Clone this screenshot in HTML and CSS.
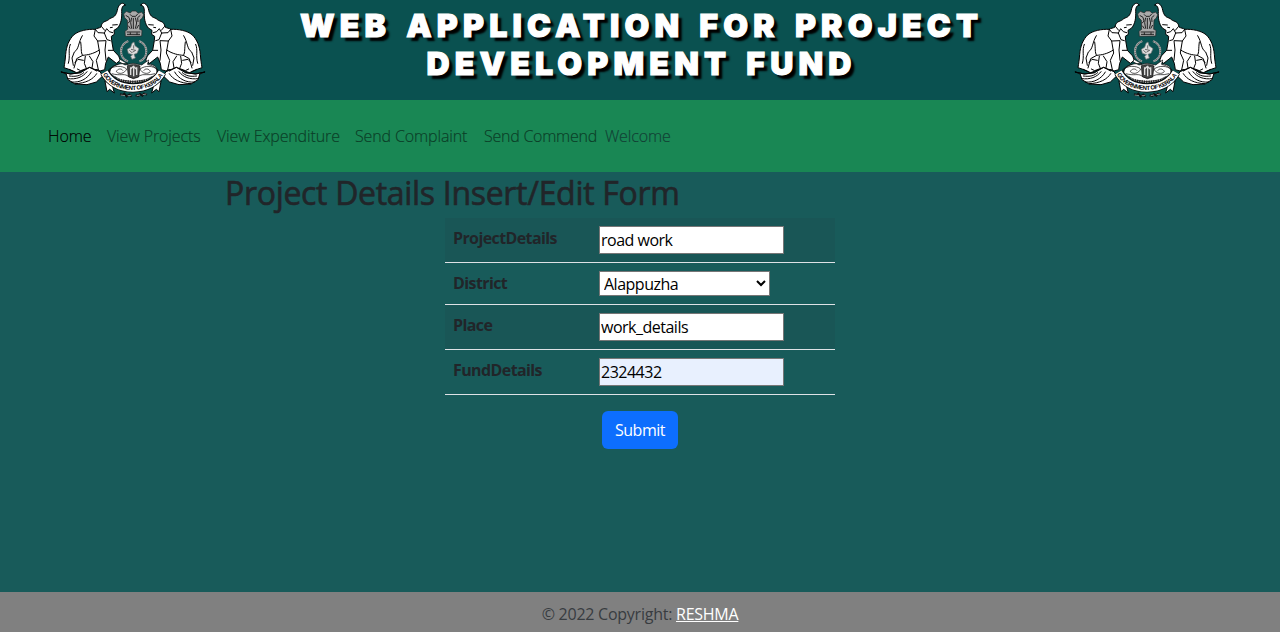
FILE: index.html
```
<!DOCTYPE html>
<html lang="en">
<head>
<meta charset="utf-8">
<title>Project Development Fund</title>
<link rel="stylesheet" href="styles.css">
</head>
<body>
<svg class="defs" aria-hidden="true">
  <defs>
    <g id="elephant" stroke-linejoin="round" stroke-linecap="round">
      <path fill="#fff" stroke="#000" stroke-width="3" d="M225 15C221 5 208 9 203 26C200 42 195 51 183 54C177 56 176 61 168 63C158 66 154 72 153 81C147 85 141 84 136 88C112 87 87 92 72 104C56 119 49 140 47 163C46 178 44 191 42 203L54 207L80 218L110 207L143 209L150 213L164 209L167 190L175 171L199 190L211 181L206 168L190 151L185 122L184 109L193 103L192 91L203 84C214 70 216 53 215 34C215 23 217 17 225 15Z"/>
      <g fill="none" stroke="#000" stroke-width="3">
        <path d="M136 88L144 98L163 99L171 119L181 122M136 88L132 108L143 123L149 159L139 181L145 209M143 123L168 122L165 150L168 181M163 99L170 86L178 95L188 98M155 80L164 91M188 75L202 74M181 83L187 82"/>
        <path d="M92 126C95 145 92 158 98 166L80 176L72 204M148 150C130 162 112 165 98 166M97 107C84 128 88 146 73 156L66 174L70 196M61 133C53 151 62 167 55 190M106 169L103 190L109 205M118 168L129 185L126 204M175 151L190 151M75 187L84 178L100 181"/>
      </g>
      <path d="M34 216L61 222L92 218L119 202L150 215L158 228L139 246L111 254L75 252L54 239L49 223Z" fill="#fff" stroke="#000" stroke-width="3"/>
      <path d="M34 216L61 222L91 218M53 236C79 239 98 232 111 215M64 246C89 249 112 237 124 216M76 251C107 250 130 238 140 221M58 228C79 231 91 227 101 218M82 207L92 212L119 202L140 213M58 208L73 215" fill="none" stroke="#000" stroke-width="3"/>
      <path d="M165 244L171 275L179 268L193 279L188 260" fill="#fff" stroke="#000" stroke-width="3"/>
    </g>
    <path id="ribbon-arc" d="M157 222Q185 269 249 270Q313 269 341 222"/>
    <symbol id="emblem" viewBox="0 0 495 300">
      <use href="#elephant"/>
      <use href="#elephant" transform="translate(498 0) scale(-1 1)"/>
      <g fill="none" stroke="#aaa" stroke-width="6">
        <path d="M235 123C205 135 207 174 234 184M267 123C297 135 295 174 268 184"/>
        <path d="M235 123C205 135 207 174 234 184M267 123C297 135 295 174 268 184" stroke="#222" stroke-width="2" stroke-dasharray="3 3"/>
      </g>
      <path d="M224 53L221 42L229 34L241 39L246 33L258 33L264 40L275 36L281 44L277 54L270 60L269 88L276 91L275 108L226 109L225 94L233 88L232 61Z" fill="#aaa" stroke="#222" stroke-width="2"/>
      <path d="M227 46L237 52L240 63L234 70M240 43L246 49L257 49L263 42M271 46L263 53L264 66M245 53L242 68L245 86M256 53L260 69L256 86M250 54V87M235 77L241 86M266 75L260 86M230 96H271M231 103H270M241 97V105M261 97V105" stroke="#222" stroke-width="3" fill="none"/>
      <path d="M246 130L252 126L255 137L267 146L261 160L252 163L256 174L246 178L242 169L248 164L235 160L232 148L242 142Z" fill="#ddd" stroke="#777" stroke-width="2"/>
      <path d="M243 148L257 151L247 157M238 151L246 158M251 136V146" stroke="#333" stroke-width="2" fill="none"/>
      <path d="M180 220C176 202 200 188 233 191L210 178L207 185L225 195L249 190L275 195L296 180L293 192C316 191 326 207 319 223L286 244L249 250L211 244Z" fill="#fff" stroke="#000" stroke-width="2"/>
      <g fill="none" stroke="#000" stroke-width="2">
        <path d="M175 210C190 196 217 196 230 207C224 221 207 224 199 215C202 206 214 204 219 212M325 210C308 196 286 196 270 207C276 221 293 224 301 215C298 206 286 204 281 212"/>
        <path d="M185 221C211 228 220 220 232 227C246 235 255 235 269 227C281 220 294 228 315 221M194 229L212 240L249 245L286 240L307 229M205 193C184 199 181 204 178 217M292 193C316 199 319 204 322 217"/>
      </g>
      <path d="M232 197L245 194H257L270 198L266 231L250 236L235 230Z" fill="#444" stroke="#000" stroke-width="2"/>
      <path d="M251 197V229M242 207L250 199L259 207M242 202V225M260 202V225" stroke="#ddd" stroke-width="4" fill="none"/>
      <path d="M205 239C234 248 268 248 295 239" stroke="#222" stroke-width="8" fill="none" stroke-dasharray="4 3"/>
      <path d="M163 217Q189 263 249 264Q309 263 336 217" fill="none" stroke="#000" stroke-width="27"/>
      <path d="M163 217Q189 263 249 264Q309 263 336 217" fill="none" stroke="#fff" stroke-width="22"/>
      <text class="ribbon-text"><textPath href="#ribbon-arc" startOffset="2" textLength="212">GOVERNMENT OF KERALA</textPath></text>
      <path d="M210 283L218 285L223 281L230 289L238 284L245 289M257 286L265 288L270 282L277 287L282 281L291 284" stroke="#111" stroke-width="6" fill="none"/>
      <path d="M212 285L225 287M233 287L244 286M260 287L270 285M278 284L289 282" stroke="#bbb" stroke-width="2" fill="none"/>
    </symbol>
  </defs>
</svg>
<header class="banner">
  <svg class="emblem"><use href="#emblem"/></svg>
  <h1 class="banner-title"><span class="line-one">WEB APPLICATION FOR PROJECT</span><span class="line-two">DEVELOPMENT FUND</span></h1>
  <svg class="emblem"><use href="#emblem"/></svg>
</header>
<nav class="navbar">
  <a class="nav-link active home">Home</a>
  <a class="nav-link projects">View Projects</a>
  <a class="nav-link expenditure">View Expenditure</a>
  <a class="nav-link complaint">Send Complaint</a>
  <a class="nav-link commend">Send Commend</a>
  <span class="welcome">Welcome</span>
</nav>
<main class="content">
  <h2 class="form-title">Project Details Insert/Edit Form</h2>
  <form class="details-form">
    <div class="row striped"><label>ProjectDetails</label><input type="text" value="road work"></div>
    <div class="row short"><label>District</label><select><option>Alappuzha</option></select></div>
    <div class="row striped"><label>Place</label><input type="text" value="work_details"></div>
    <div class="row"><label>FundDetails</label><input class="autofilled" type="text" value="2324432"></div>
    <button class="submit" type="button">Submit</button>
  </form>
</main>
<footer class="footer"><span>© 2022 Copyright: <a class="author">RESHMA</a></span></footer>
</body>
</html>
```
FILE: styles.css
```
* { box-sizing: border-box; }
body {
  margin: 0;
  height: 632px;
  display: flex;
  flex-direction: column;
  overflow: hidden;
  background: #185b5a;
  color: #212529;
  font: 16px/24px "Open Sans", "Noto Sans", sans-serif;
}
.defs { position: absolute; width: 0; height: 0; }
.banner {
  height: 100px;
  flex: none;
  display: flex;
  justify-content: space-between;
  padding: 0 51px 0 50px;
  background: #0a5150;
}
.emblem { width: 165px; height: 100px; flex: none; }
.ribbon-text { font: bold 18px "Liberation Sans", sans-serif; fill: #000; }
.banner-title {
  margin: 0;
  padding: 7px 0 0 4px;
  display: flex;
  flex-direction: column;
  align-items: center;
  white-space: nowrap;
  color: #fff;
  font: 900 32px/38px Inter, sans-serif;
  letter-spacing: 5.2px;
  word-spacing: 3.5px;
  -webkit-text-stroke: 1.1px #fff;
  text-shadow: 4px 4px 2px #000;
}
.navbar {
  height: 72px;
  flex: none;
  display: flex;
  align-items: center;
  padding-left: 40px;
  background: #198754;
}
.nav-link {
  padding: 0 8px;
  white-space: nowrap;
  font-weight: 300;
  letter-spacing: -0.13px;
  color: #0b3d27;
  -webkit-text-stroke: 0.15px #0b3d27;
}
.nav-link.active { color: #000; -webkit-text-stroke-color: #000; }
.home { width: 59px; }
.projects { width: 110px; }
.expenditure { width: 138px; }
.complaint { width: 129px; }
.commend { width: 129px; letter-spacing: -0.25px; }
.welcome {
  font-weight: 300;
  letter-spacing: -0.15px;
  color: #123f34;
  -webkit-text-stroke: 0.15px #123f34;
}
.content { flex: 1; }
.form-title {
  margin: 0 0 6px;
  padding: 2px 0 0 225px;
  font-size: 32px;
  line-height: 38px;
  font-weight: 500;
  letter-spacing: -0.31px;
  -webkit-text-stroke: 0.6px #212529;
}
.details-form { width: 390px; margin-left: 445px; }
.row {
  display: flex;
  align-items: flex-start;
  height: 45px;
  padding: 8px;
  border-bottom: 1px solid #dee2e6;
}
.row.short { height: 42px; }
.row.striped { background: #195656; }
.row label { width: 146px; font-weight: 700; letter-spacing: -0.6px; }
.row input,
.row select,
.submit {
  font: 16px "Open Sans", sans-serif;
  letter-spacing: -0.5px;
}
.row input {
  width: 185px;
  height: 28px;
  padding: 0 0 1px 1px;
  border: 1px solid #767676;
  background: #fff;
  color: #000;
}
.row input.autofilled { background: #e8f0fe; }
.row select {
  width: 171px;
  height: 25px;
  padding: 0;
  border: 1px solid #767676;
  border-radius: 0;
  background: #fff;
  color: #000;
}
.submit {
  display: block;
  width: 76px;
  height: 38px;
  margin: 16px 0 0 157px;
  padding: 0;
  border: 0;
  border-radius: 6px;
  background: #0d6efd;
  color: #fff;
}
.footer {
  height: 40px;
  flex: none;
  padding-top: 10px;
  text-align: center;
  letter-spacing: -0.25px;
  background: #808080;
  color: #383c40;
}
.author { color: #fff; text-decoration: underline; }
```
